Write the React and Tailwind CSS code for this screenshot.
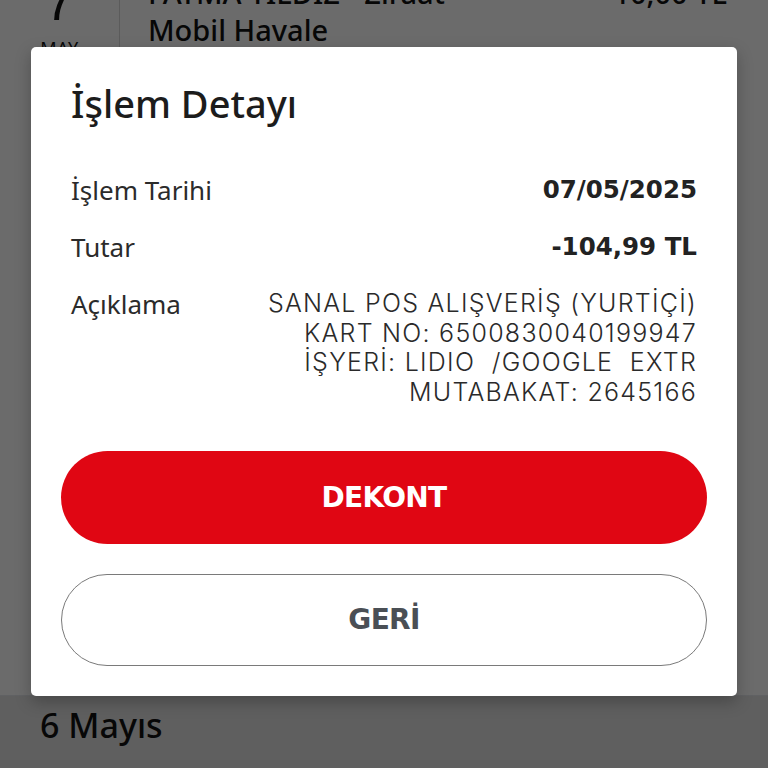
export default function App() {
  return (
    <div className="relative h-[768px] w-full overflow-hidden bg-white font-['Noto_Sans',sans-serif] text-[#111]">
      {/* background list, dimmed by the overlay */}
      <div className="-mt-[26px] flex h-[722px] border-b border-gray-200">
        <div className="flex w-[120px] flex-col items-center border-r border-[#d8d8d8]">
          <span className="text-[54px] leading-[54px] font-['Liberation_Sans',sans-serif] font-light">7</span>
          <span className="mt-[10px] text-[18px] leading-[20px] tracking-wide">MAY</span>
        </div>
        <div className="flex flex-1 justify-between pl-[28px] pr-[41px]">
          <div className="text-[29px] font-medium leading-[37px]">
            <div>FATMA YILDIZ - Ziraat</div>
            <div>Mobil Havale</div>
          </div>
          <div className="text-[29px] font-medium leading-[37px]">-10,00 TL</div>
        </div>
      </div>
      <div className="bg-[#e2e2e2] px-[40px] pt-[4px] pb-[40px]">
        <span className="text-[34px] font-medium">6 Mayıs</span>
      </div>

      <div className="absolute inset-0 bg-black/[0.58]" />

      <div className="absolute left-[31px] top-[47px] w-[706px] rounded-[5px] bg-white px-[30px] pt-[30px] pb-[30px] shadow-[0_6px_16px_rgba(0,0,0,0.25)]">
        <h2 className="px-[10px] text-[38px] font-medium leading-[52px] text-[#1c1c1c]">İşlem Detayı</h2>

        <div className="mt-[46px] px-[10px] text-[26px] leading-[30px]">
          <div className="flex items-center justify-between">
            <span className="text-[#2b2b2b]">İşlem Tarihi</span>
            <span className="font-['DejaVu_Sans',sans-serif] text-[24.5px] font-bold text-[#222]">07/05/2025</span>
          </div>
          <div className="mt-[27px] flex items-center justify-between">
            <span className="text-[#2b2b2b]">Tutar</span>
            <span className="font-['DejaVu_Sans',sans-serif] text-[24.5px] font-bold text-[#222]">-104,99 TL</span>
          </div>
          <div className="mt-[27px] flex justify-between">
            <span className="text-[#2b2b2b]">Açıklama</span>
            <div className="text-right font-['Inter',sans-serif] text-[25px] font-light leading-[29.5px] tracking-[0.05em] text-[#2a2a2a]">
              <div>SANAL POS ALIŞVERİŞ (YURTİÇİ)</div>
              <div>KART NO: 6500830040199947</div>
              <div className="whitespace-pre">İŞYERİ: LIDIO  /GOOGLE  EXTR</div>
              <div>MUTABAKAT: 2645166</div>
            </div>
          </div>
        </div>

        <button className="mt-[44px] flex h-[93px] w-full items-center justify-center rounded-full bg-[#e00613] font-['DejaVu_Sans',sans-serif] text-[28px] font-bold tracking-tight text-white">
          DEKONT
        </button>
        <button className="mt-[30px] flex h-[92px] w-full items-center justify-center rounded-full border border-[#7a7a7a] bg-white font-['DejaVu_Sans',sans-serif] text-[28px] font-bold tracking-tight text-[#4a4f55]">
          GERİ
        </button>
      </div>
    </div>
  );
}
